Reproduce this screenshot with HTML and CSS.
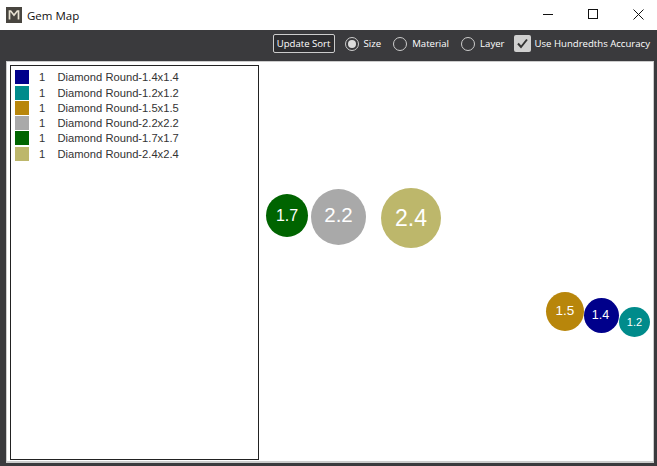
FILE: index.html
```html
<!DOCTYPE html>
<html>
<head>
    <link rel="stylesheet" href="styles.css">
    <title>Gem Map</title>
</head>
<body>
    <div class="title-bar">
        <div class="app-icon">
            <svg width="16" height="16" viewBox="0 0 16 16">
                <rect width="16" height="16" fill="#48453f"/>
                <path d="M3.5 12.5V4h1.2L8 8.2 11.3 4h1.2v8.5" fill="none" stroke="#e8e2d2" stroke-width="1.7"/>
            </svg>
        </div>
        <span class="title-text">Gem Map</span>
        <div class="window-buttons">
            <svg class="win-btn" width="45" height="30" viewBox="0 0 45 30">
                <path d="M18 14.5h10" stroke="#111" fill="none"/>
            </svg>
            <svg class="win-btn" width="45" height="30" viewBox="0 0 45 30">
                <rect x="18.5" y="9.5" width="9" height="9" stroke="#111" fill="none"/>
            </svg>
            <svg class="win-btn" width="42" height="30" viewBox="0 0 42 30">
                <path d="M18.5 9.5l10 10M28.5 9.5l-10 10" stroke="#111" fill="none"/>
            </svg>
        </div>
    </div>

    <div class="toolbar">
        <button class="sort-btn">Update Sort</button>
        <label class="radio-item"><span class="radio checked"></span>Size</label>
        <label class="radio-item"><span class="radio"></span>Material</label>
        <label class="radio-item last"><span class="radio"></span>Layer</label>
        <label class="check-item">
            <span class="check">
                <svg width="17" height="17" viewBox="0 0 17 17">
                    <path d="M4 8.5l3 3.5L13 4.5" fill="none" stroke="#333" stroke-width="2"/>
                </svg>
            </span>
            Use Hundredths Accuracy
        </label>
    </div>

    <div class="content">
        <div class="gem-list">
            <div class="gem-row"><span class="swatch navy"></span><span class="qty">1</span><span>Diamond Round-1.4x1.4</span></div>
            <div class="gem-row"><span class="swatch teal"></span><span class="qty">1</span><span>Diamond Round-1.2x1.2</span></div>
            <div class="gem-row"><span class="swatch gold"></span><span class="qty">1</span><span>Diamond Round-1.5x1.5</span></div>
            <div class="gem-row"><span class="swatch gray"></span><span class="qty">1</span><span>Diamond Round-2.2x2.2</span></div>
            <div class="gem-row"><span class="swatch green"></span><span class="qty">1</span><span>Diamond Round-1.7x1.7</span></div>
            <div class="gem-row"><span class="swatch khaki"></span><span class="qty">1</span><span>Diamond Round-2.4x2.4</span></div>
        </div>
        <div class="gem-map">
            <div class="gem green gem-17">1.7</div>
            <div class="gem gray gem-22">2.2</div>
            <div class="gem khaki gem-24">2.4</div>
            <div class="gem gold gem-15">1.5</div>
            <div class="gem navy gem-14">1.4</div>
            <div class="gem teal gem-12">1.2</div>
        </div>
    </div>
</body>
</html>
```

FILE: styles.css
```css
html, body {
    margin: 0;
    height: 100%;
}

body {
    display: flex;
    flex-direction: column;
    background: #3a3a3d;
    overflow: hidden;
    font-family: "Open Sans", "Noto Sans", sans-serif;
}

.title-bar {
    display: flex;
    align-items: center;
    height: 30px;
    padding-left: 6px;
    background: white;
    flex-shrink: 0;
}

.app-icon {
    display: flex;
    width: 16px;
    height: 16px;
}

.title-text {
    margin-left: 5px;
    font-size: 11.5px;
    color: #111;
}

.window-buttons {
    display: flex;
    margin-left: auto;
}

.win-btn {
    display: block;
}

.toolbar {
    display: flex;
    align-items: center;
    justify-content: flex-end;
    height: 31px;
    padding: 0 7px 4px 0;
    box-sizing: border-box;
    color: white;
    font-size: 9.6px;
    flex-shrink: 0;
}

.sort-btn {
    height: 19px;
    width: 62px;
    padding: 0;
    margin-right: 10px;
    background: #2d2d30;
    border: 1px solid #ccc;
    border-radius: 2px;
    color: white;
    font: inherit;
}

.radio-item {
    display: flex;
    align-items: center;
    gap: 5px;
    margin-right: 12px;
}

.radio-item.last {
    margin-right: 9px;
}

.radio {
    width: 12px;
    height: 12px;
    border: 1px solid #ccc;
    border-radius: 50%;
    display: flex;
    align-items: center;
    justify-content: center;
}

.radio.checked::after {
    content: "";
    width: 8px;
    height: 8px;
    border-radius: 50%;
    background: #ddd;
}

.check-item {
    display: flex;
    align-items: center;
    gap: 4px;
}

.check {
    width: 17px;
    height: 17px;
    background: #d0d0d0;
    border-radius: 2px;
    display: flex;
    align-items: center;
    justify-content: center;
}

.content {
    display: flex;
    flex: 1;
    margin: 0 3px 3px 6px;
    padding: 3px 3px 1px 3px;
    background: white;
    border: 1px solid #ccc;
    border-width: 1px 1px 2px 1px;
}

.gem-list {
    width: 239px;
    flex-shrink: 0;
    padding: 3.6px 4px 4px;
    border: 1px solid #222;
    font-family: "Liberation Sans", Arial, sans-serif;
    font-size: 11.2px;
    color: #333;
}

.gem-row {
    display: flex;
    align-items: center;
    height: 15.3px;
}

.swatch {
    width: 14px;
    height: 14px;
}

.qty {
    width: 18.5px;
    margin-left: 10px;
}

.gem-map {
    position: relative;
    flex: 1;
}

.gem {
    position: absolute;
    display: flex;
    align-items: center;
    justify-content: center;
    box-sizing: border-box;
    border-radius: 50%;
    color: white;
    font-family: "Liberation Sans", Arial, sans-serif;
}

.navy { background: #00008b; }
.teal { background: #008b8b; }
.gold { background: #b8860b; }
.gray { background: #a9a9a9; }
.green { background: #006400; }
.khaki { background: #bdb76b; }

/* placed on the map area, which starts at x=259 y=65 */
.gem-17 { left: 7px; top: 129px; width: 42px; height: 43px; font-size: 16px; padding-top: 1px; }
.gem-22 { left: 52px; top: 124px; width: 55px; height: 56px; font-size: 20.5px; padding-bottom: 4px; }
.gem-24 { left: 122px; top: 123px; width: 60px; height: 60px; font-size: 23px; }
.gem-15 { left: 287px; top: 227px; width: 38px; height: 39px; font-size: 13.5px; padding-bottom: 2px; }
.gem-14 { left: 325px; top: 233px; width: 35px; height: 35px; font-size: 12.5px; padding: 0 2px 1px 0; }
.gem-12 { left: 360px; top: 242px; width: 31px; height: 30px; font-size: 11px; }
```
